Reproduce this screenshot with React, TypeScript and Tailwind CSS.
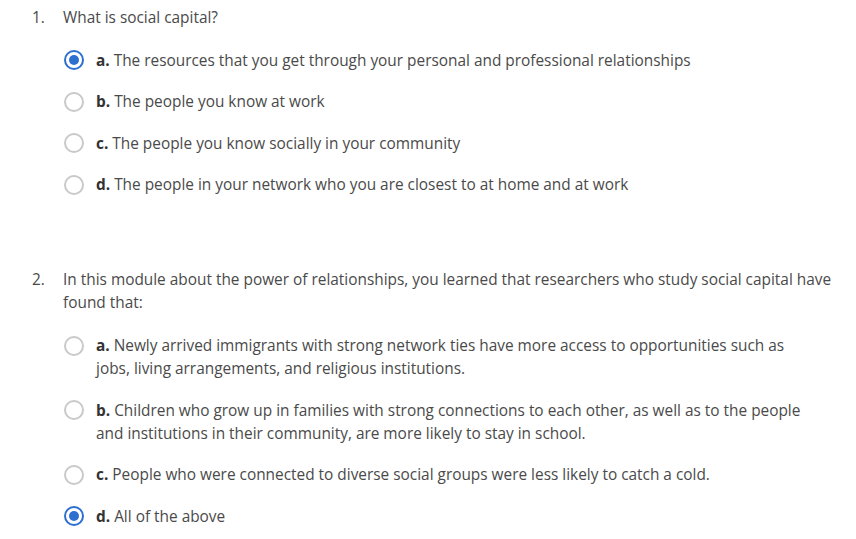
import React from "react";

interface Question {
  num: number;
  text: string;
  options: { letter: string; text: string }[];
  selected: string;
}

const questions: Question[] = [
  {
    num: 1,
    text: "What is social capital?",
    selected: "a",
    options: [
      { letter: "a", text: "The resources that you get through your personal and professional relationships" },
      { letter: "b", text: "The people you know at work" },
      { letter: "c", text: "The people you know socially in your community" },
      { letter: "d", text: "The people in your network who you are closest to at home and at work" },
    ],
  },
  {
    num: 2,
    text: "In this module about the power of relationships, you learned that researchers who study social capital have found that:",
    selected: "d",
    options: [
      {
        letter: "a",
        text: "Newly arrived immigrants with strong network ties have more access to opportunities such as jobs, living arrangements, and religious institutions.",
      },
      {
        letter: "b",
        text: "Children who grow up in families with strong connections to each other, as well as to the people and institutions in their community, are more likely to stay in school.",
      },
      { letter: "c", text: "People who were connected to diverse social groups were less likely to catch a cold." },
      { letter: "d", text: "All of the above" },
    ],
  },
];

const Radio: React.FC<{ checked: boolean }> = ({ checked }) => (
  <span
    className={
      checked
        ? "mt-[1.5px] flex h-5 w-5 shrink-0 items-center justify-center rounded-full border-2 border-[#2c6fd1]"
        : "mt-[1.5px] flex h-5 w-5 shrink-0 items-center justify-center rounded-full border-2 border-[#c9c9c9]"
    }
  >
    {checked && <span className="h-[10px] w-[10px] rounded-full bg-[#2c6fd1]" />}
  </span>
);

const App: React.FC = () => {
  return (
    <div className="min-h-screen bg-white pl-8 pr-4 pt-[5.5px] font-['Open_Sans',sans-serif] text-[15.4px] leading-[23px] text-[#4a4a4a]">
      <div className="flex flex-col gap-[72px]">
        {questions.map((q) => (
          <div key={q.num} className="flex">
            <div className="w-[31px] shrink-0">{q.num}.</div>
            <div className="flex flex-col gap-5">
              <p className="w-[777px]">{q.text}</p>
              <div className="flex flex-col gap-[18.5px] pl-px">
                {q.options.map((o) => (
                  <label key={o.letter} className="flex items-start gap-3">
                    <Radio checked={o.letter === q.selected} />
                    <span className="w-[715px]">
                      <b className="font-bold text-[#333]">{o.letter}.</b> {o.text}
                    </span>
                  </label>
                ))}
              </div>
            </div>
          </div>
        ))}
      </div>
    </div>
  );
};

export default App;
